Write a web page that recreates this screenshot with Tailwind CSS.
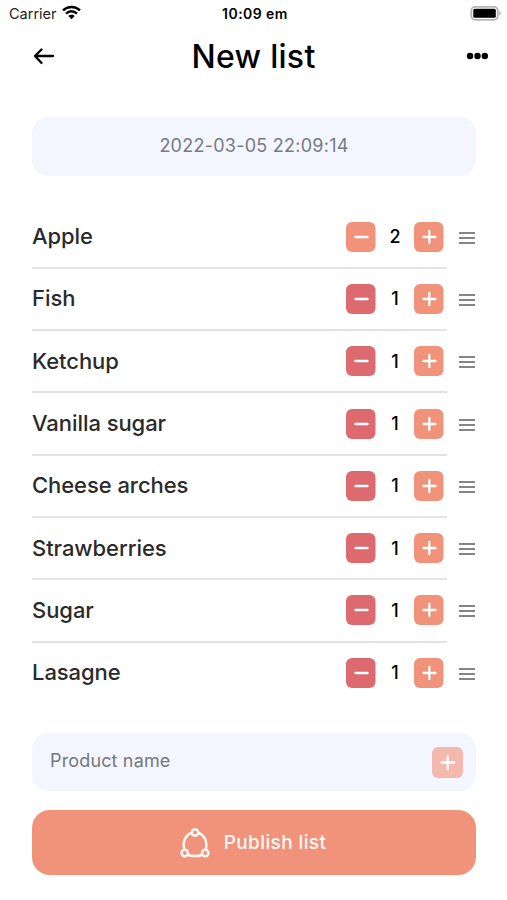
<!DOCTYPE html>
<html lang="en">
<head>
<meta charset="utf-8">
<title>New list</title>
<script src="https://cdn.jsdelivr.net/npm/@tailwindcss/browser@4"></script>
</head>
<body class="bg-white">
<main class="w-[507px] h-[900px] overflow-hidden bg-white font-['Inter','Liberation_Sans',sans-serif] text-black">
  <div class="grid h-[28px] grid-cols-3 items-center pl-[9px] pr-[6px] pb-px">
    <div class="flex items-center gap-[5px] text-[14.5px] text-[#222]">
      <span id="carrier">Carrier</span>
      <svg class="-mt-[2px]" width="19" height="15" viewBox="0 0 19 15" fill="none" stroke="#000" stroke-width="2.5"><path d="M1 5.4C5.8.8 13.2.8 18 5.4"/><path d="M4 8.6c3.200-3 7.800-3 11 0"/><path d="M6.300 11 9.500 14.300 12.700 11C11 9.300 8 9.300 6.300 11Z" fill="#000" stroke="none"/></svg>
    </div>
    <span class="text-center text-[14px] font-semibold tracking-[0.45px]">10:09 em</span>
    <svg class="justify-self-end" width="31" height="16" viewBox="0 0 31 16"><rect x="1.300" y=".8" width="26.500" height="13" rx="4" fill="#fff" stroke="#b5b5b5" stroke-width="1.800"/><rect x="3.300" y="2.800" width="22.500" height="9" rx="1.500" fill="#000"/><path d="M29.300 4.800c1.800 1 1.800 4 0 5z" fill="#aaa"/></svg>
  </div>
  <header class="grid h-[58px] grid-cols-[1fr_auto_1fr] items-center pl-[33px] pr-[19px]">
    <svg width="22" height="20" viewBox="0 0 22 20" fill="none" stroke="#000" stroke-width="2.300" stroke-linecap="round" stroke-linejoin="round"><path d="M20 9H2.500M8.500 2.500 2 9 8.500 16"/></svg>
    <h1 class="-ml-[14px] text-[32px] font-medium leading-none tracking-[0.3px]">New list</h1>
    <svg class="justify-self-end -mt-[3px]" width="22" height="8" viewBox="0 0 22 8"><circle cx="4" cy="4" r="3.200"/><circle cx="11.500" cy="4" r="3.200"/><circle cx="18.800" cy="4" r="3.200"/></svg>
  </header>
  <div class="ml-[32px] mr-[31px] mt-[31px] flex h-[58.500px] items-center justify-center rounded-[16px] bg-[#f3f6ff] pb-[2px] text-[18px] tracking-[0.25px] text-[#777a7e]"><span>2022-03-05 22:09:14</span></div>
  <ul id="products" class="ml-[32px] mr-[31px] mt-[31px]"></ul>
  <div class="ml-[32px] mr-[31px] mt-[28px] flex h-[58px] items-center justify-between rounded-[16px] bg-[#f3f6ff] pl-[18px] pr-[13px] text-[18px] text-[#74777f]">
    <span class="-mt-[3px] tracking-[0.15px]">Product name</span>
    <svg class="mt-px" width="31" height="31" viewBox="0 0 31 31" fill="none" stroke="#fff" stroke-width="2.300" stroke-linecap="round"><rect width="31" height="31" rx="6" fill="#f3b9ae" stroke="none"/><path d="M9.500 15.500h12.500M15.700 9.500v12.500"/></svg>
  </div>
  <button class="mx-[32px] mt-[19px] flex h-[65.500px] w-[444px] items-center justify-center gap-[14px] rounded-[18px] bg-[#f0937a] pr-[2px] text-[19px] font-medium tracking-[0.4px] text-[#fff8f4]">
    <svg width="30" height="30" viewBox="0 0 30 30" fill="none" stroke="#fff8f4" stroke-width="2.500"><path d="M11.500 4.800C5.500 7 2.400 13.500 4.200 20.800M18.500 4.800c6 2.200 9.100 8.700 7.300 16M8.300 27c4.200 1.400 9.200 1.400 13.400 0"/><circle cx="15" cy="4.500" r="3.200"/><circle cx="4.800" cy="25" r="3.200"/><circle cx="25.200" cy="25" r="3.200"/></svg>
    <span class="mt-[2px]">Publish list</span>
  </button>
</main>
<template id="row">
  <li class="flex h-[62.300px] items-center justify-between">
    <div class="flex h-full w-[415px] items-center border-b-2 border-[#e3e3e3]">
      <span data-name class="-mt-px flex-1 text-[22px] font-medium leading-none tracking-[-0.060px] text-[#2a2a2a]"></span>
      <svg data-minus class="text-[#dd6a6e]" width="30" height="30" viewBox="0 0 30 30" fill="none" stroke="#fff" stroke-width="2.400" stroke-linecap="round"><rect width="29.500" height="30" rx="6" fill="currentColor" stroke="none"/><path d="M9.500 15h12"/></svg>
      <span data-count class="mt-px w-[38px] text-center text-[18px] font-medium leading-none"></span>
      <svg class="mr-[3px]" width="30" height="30" viewBox="0 0 30 30" fill="none" stroke="#fff" stroke-width="2.300" stroke-linecap="round"><rect width="29.500" height="30" rx="6" fill="#f0937a" stroke="none"/><path d="M9.500 15h12M15.300 9v12"/></svg>
    </div>
    <svg class="mr-px" width="16" height="14" viewBox="0 0 16 14" fill="none" stroke="#858585" stroke-width="2.200"><path d="M0 2h16M0 7h16M0 12h16"/></svg>
  </li>
</template>
<script>
const products = [["Apple",2],["Fish",1],["Ketchup",1],["Vanilla sugar",1],["Cheese arches",1],["Strawberries",1],["Sugar",1],["Lasagne",1]];
const list = document.getElementById("products");
const row = document.getElementById("row");
products.forEach(([name, count], i) => {
  const item = row.content.cloneNode(true);
  item.querySelector("[data-name]").textContent = name;
  item.querySelector("[data-count]").textContent = count;
  if (count > 1) item.querySelector("[data-minus]").setAttribute("class", "text-[#f0937a]");
  if (i === products.length - 1) item.querySelector("div").classList.replace("border-[#e3e3e3]", "border-transparent");
  list.append(item);
});
</script>
</body>
</html>
